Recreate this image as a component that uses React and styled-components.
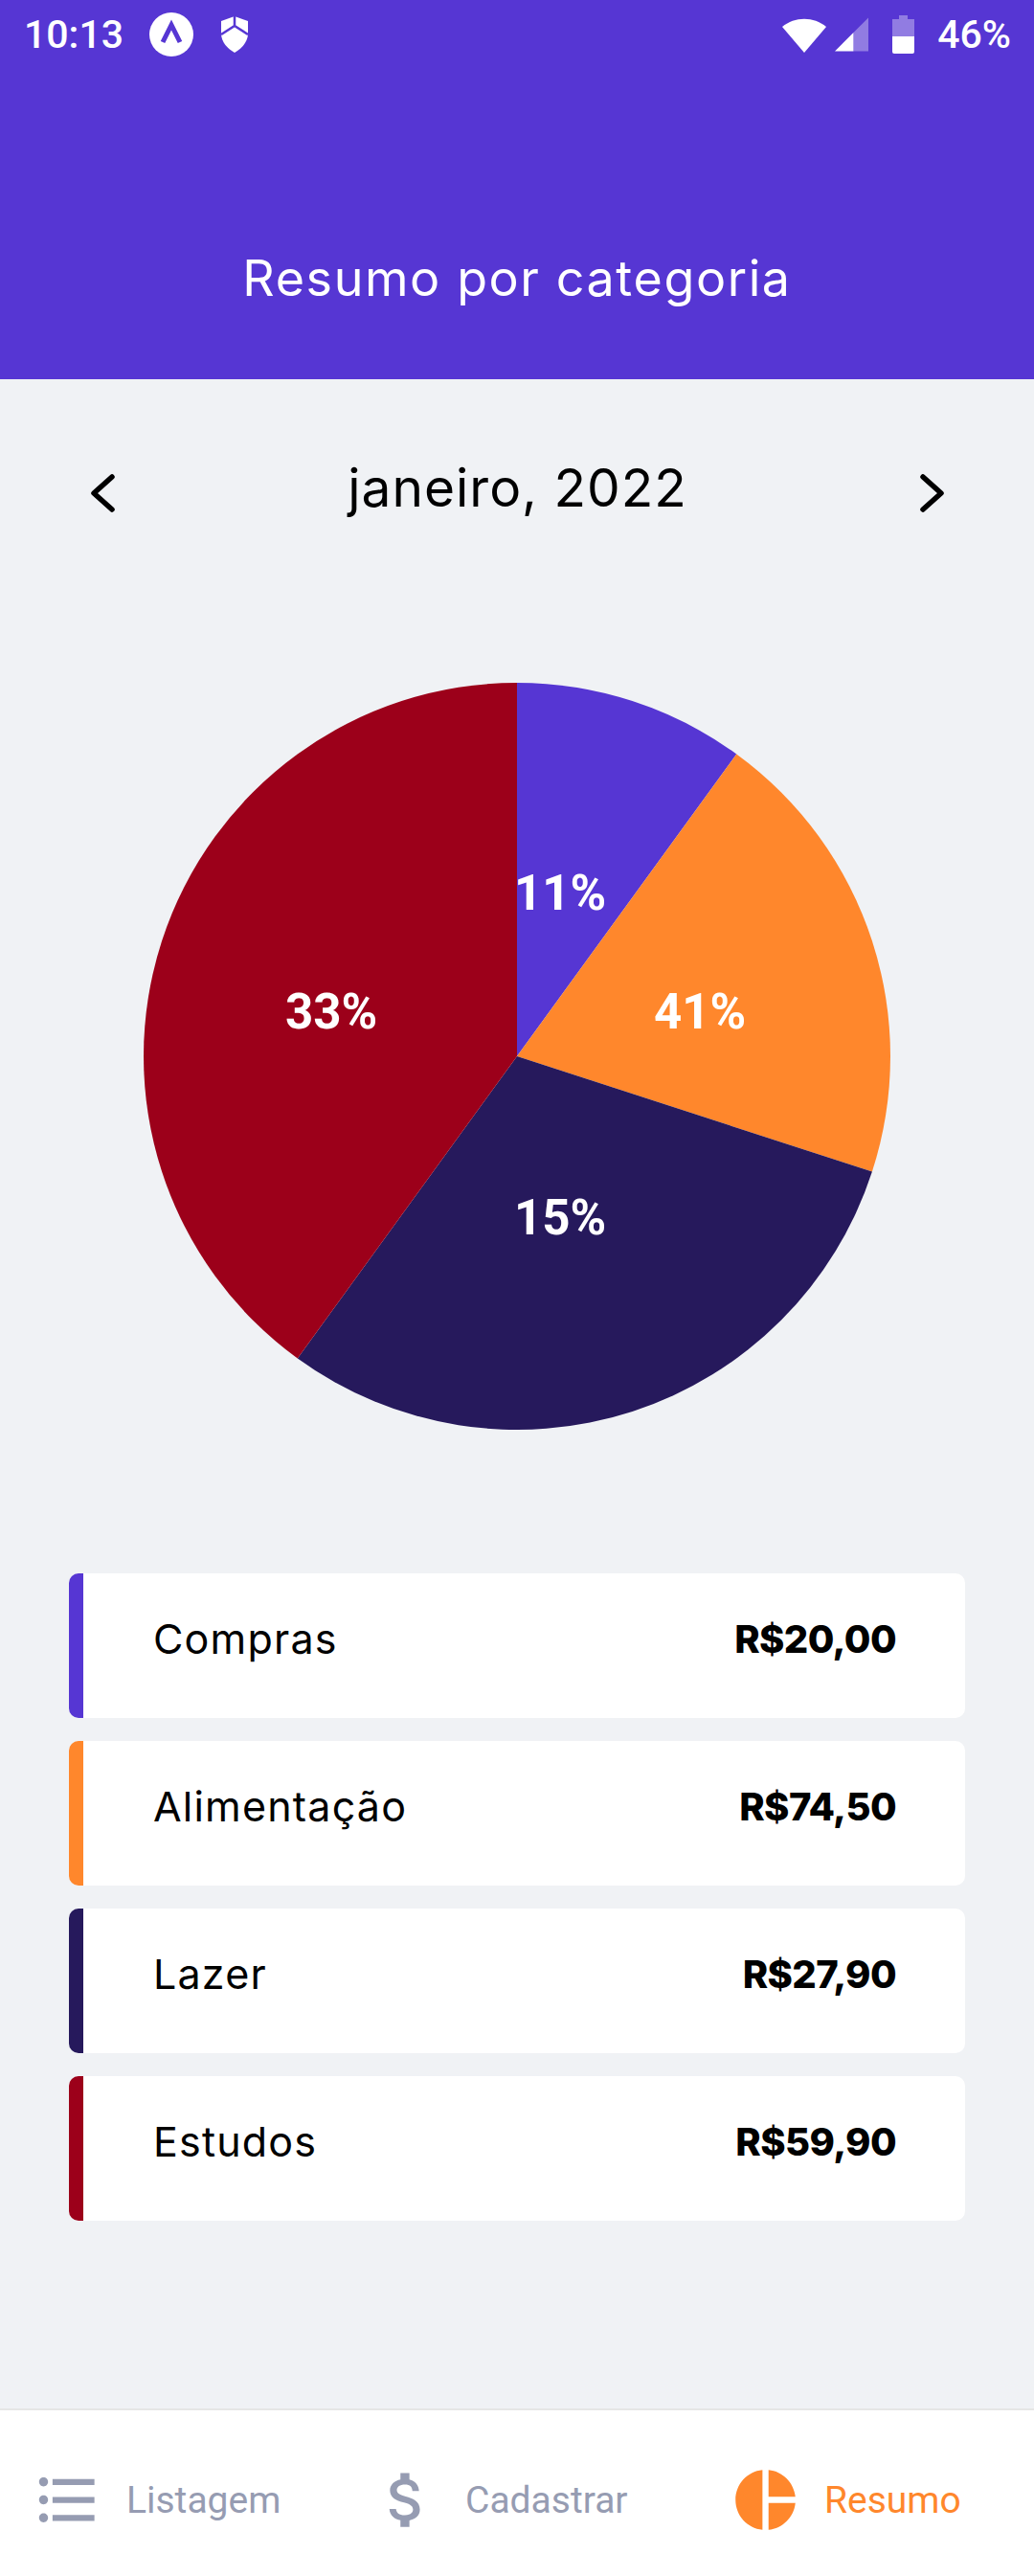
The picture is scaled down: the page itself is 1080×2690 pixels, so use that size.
import React from "react";
import styled, { createGlobalStyle } from "styled-components";

const Global = createGlobalStyle`
  html, body { margin: 0; padding: 0; background: #f0f2f5; }
  * { box-sizing: border-box; }
`;

const Page = styled.div`
  width: 1080px;
  height: 2690px;
  display: flex;
  flex-direction: column;
  background: #f0f2f5;
  overflow: hidden;
`;

const Header = styled.header`
  height: 396px;
  flex: none;
  background: #5636d3;
  color: #fff;
  display: flex;
  flex-direction: column;
`;

const StatusBar = styled.div`
  height: 72px;
  padding: 0 24px 0 25px;
  display: flex;
  align-items: center;
  justify-content: space-between;
  font-family: Roboto, sans-serif;
  font-size: 41px;
  font-weight: 500;
`;

const StatusGroup = styled.div`
  display: flex;
  align-items: center;
`;

const Clock = styled.span`
  margin-right: 27px;
`;

const Battery = styled.span`
  margin-left: 24px;
`;

const Title = styled.h1`
  margin: 0;
  padding-top: 189px;
  text-align: center;
  font-family: Inter, sans-serif;
  font-weight: 400;
  font-size: 52px;
  letter-spacing: 1.6px;
  line-height: 60px;
`;

const Selector = styled.div`
  margin-top: 84px;
  padding: 0 94px 0 95px;
  height: 70px;
  display: flex;
  align-items: center;
  justify-content: space-between;
`;

const Month = styled.span`
  font-family: Inter, sans-serif;
  font-weight: 400;
  font-size: 55px;
  letter-spacing: 1px;
  line-height: 70px;
  color: #000;
  margin-top: -12px;
`;

const ChartBox = styled.div`
  margin-top: 163px;
  display: flex;
  justify-content: center;
`;

const ChartLabel = styled.text`
  font-family: Roboto, sans-serif;
  font-weight: 700;
  font-size: 51px;
  fill: #fff;
  text-anchor: middle;
`;

const List = styled.ul`
  list-style: none;
  margin: 150px 0 0;
  padding: 0 72px;
  display: flex;
  flex-direction: column;
  gap: 24px;
`;

const Card = styled.li`
  height: 151px;
  background: #fff;
  border-left: 15px solid ${(p) => p.$color};
  border-radius: 10px;
  padding: 0 72px 15px 73px;
  display: flex;
  align-items: center;
  justify-content: space-between;
`;

const CardName = styled.span`
  font-family: Inter, sans-serif;
  font-weight: 400;
  font-size: 43px;
  letter-spacing: 1.2px;
  color: #000;
`;

const CardValue = styled.span`
  font-family: Inter, sans-serif;
  font-weight: 800;
  font-size: 40px;
  letter-spacing: -0.6px;
  color: #000;
`;

const TabBar = styled.nav`
  margin-top: auto;
  height: 175px;
  flex: none;
  background: #fff;
  border-top: 2px solid #e6e6e6;
  padding: 14px 0 0 33px;
  display: grid;
  grid-template-columns: 354px 375px 1fr;
  align-items: center;
`;

const Tab = styled.div`
  display: flex;
  align-items: center;
  gap: 24px;
  color: ${(p) => (p.$active ? "#ff872c" : "#969cb2")};
  font-family: Roboto, sans-serif;
  font-size: 39px;
`;

const TabIcon = styled.svg`
  width: 75px;
  height: 75px;
  fill: currentColor;
  flex: none;
`;

const Chevron = styled.svg`
  width: 25px;
  height: 40px;
  fill: none;
  stroke: #000;
  stroke-width: 5.5;
  stroke-linecap: round;
  stroke-linejoin: round;
  flex: none;
`;

const StatusIcon = styled.svg`
  display: block;
  flex: none;
  fill: #fff;
  margin-left: ${(p) => p.$ml || 0}px;
`;

const slices = [
  { color: "#5636d3", from: 0, to: 36 },
  { color: "#ff872c", from: 36, to: 108 },
  { color: "#26195c", from: 108, to: 216 },
  { color: "#9c001a", from: 216, to: 360 },
];
const pt = (deg) => {
  const r = (deg * Math.PI) / 180;
  return `${390 + 390 * Math.sin(r)} ${390 - 390 * Math.cos(r)}`;
};
const labels = [
  { t: "11%", x: 435, y: 237 },
  { t: "41%", x: 581, y: 361 },
  { t: "15%", x: 435, y: 576 },
  { t: "33%", x: 196, y: 361 },
];
const items = [
  { name: "Compras", value: "R$20,00", color: "#5636d3" },
  { name: "Alimentação", value: "R$74,50", color: "#ff872c" },
  { name: "Lazer", value: "R$27,90", color: "#26195c" },
  { name: "Estudos", value: "R$59,90", color: "#9c001a" },
];

export default function App() {
  return (
    <Page>
      <Global />
      <Header>
        <StatusBar>
          <StatusGroup>
            <Clock>10:13</Clock>
            <StatusIcon width="46" height="46" viewBox="0 0 46 46">
              <circle cx="23" cy="23" r="23" />
              <path d="M14 31 L23 13 L32 31" fill="none" stroke="#5636d3" strokeWidth="5" />
            </StatusIcon>
            <StatusIcon width="30" height="38" viewBox="0 0 30 38" $ml={28}>
              <path d="M15 0 L29 5 V18 C29 27 22 34 15 38 C8 34 1 27 1 18 V5 Z" />
              <path d="M1 19 L15 10 L29 19 M15 0 V10" fill="none" stroke="#5636d3" strokeWidth="2.5" />
            </StatusIcon>
          </StatusGroup>
          <StatusGroup>
            <StatusIcon width="46" height="38" viewBox="0 0 46 38">
              <path d="M0 11 C13 0 33 0 46 11 L23 38 Z" />
            </StatusIcon>
            <StatusIcon width="35" height="36" viewBox="0 0 36 36" $ml={9}>
              <path d="M36 0 V36 H20 V16 Z" opacity="0.35" />
              <path d="M0 36 L20 16 V36 Z" />
            </StatusIcon>
            <StatusIcon width="23" height="40" viewBox="0 0 23 40" $ml={25}>
              <path d="M7 0 H16 V4 H23 V22 H0 V4 H7 Z" opacity="0.35" />
              <path d="M0 22 H23 V38 a2 2 0 0 1 -2 2 H2 a2 2 0 0 1 -2 -2 Z" />
            </StatusIcon>
            <Battery>46%</Battery>
          </StatusGroup>
        </StatusBar>
        <Title>Resumo por categoria</Title>
      </Header>

      <Selector>
        <Chevron viewBox="0 0 25 40"><path d="M22 3 L3 20 L22 37" /></Chevron>
        <Month>janeiro, 2022</Month>
        <Chevron viewBox="0 0 25 40"><path d="M3 3 L22 20 L3 37" /></Chevron>
      </Selector>

      <ChartBox>
        <svg width="780" height="780" viewBox="0 0 780 780">
          {slices.map((s) => (
            <path
              key={s.color}
              fill={s.color}
              d={`M390 390 L${pt(s.from)} A390 390 0 ${s.to - s.from > 180 ? 1 : 0} 1 ${pt(s.to % 360 === 0 ? 359.999 : s.to)} Z`}
            />
          ))}
          {labels.map((l) => (
            <ChartLabel key={l.t} x={l.x} y={l.y}>{l.t}</ChartLabel>
          ))}
        </svg>
      </ChartBox>

      <List>
        {items.map((i) => (
          <Card key={i.name} $color={i.color}>
            <CardName>{i.name}</CardName>
            <CardValue>{i.value}</CardValue>
          </Card>
        ))}
      </List>

      <TabBar>
        <Tab>
          <TabIcon viewBox="0 0 24 24">
            <path d="M4 10.5c-.83 0-1.5.67-1.5 1.5s.67 1.5 1.5 1.5 1.5-.67 1.5-1.5-.67-1.5-1.5-1.5zm0-6c-.83 0-1.5.67-1.5 1.5S3.17 7.5 4 7.5 5.5 6.83 5.5 6 4.83 4.5 4 4.5zm0 12c-.83 0-1.5.68-1.5 1.5s.68 1.5 1.5 1.5 1.5-.68 1.5-1.5-.67-1.5-1.5-1.5zM7 19h14v-2H7v2zm0-6h14v-2H7v2zm0-8v2h14V5H7z" />
          </TabIcon>
          Listagem
        </Tab>
        <Tab>
          <TabIcon viewBox="0 0 24 24">
            <path d="M11.8 10.9c-2.27-.59-3-1.2-3-2.15 0-1.09 1.01-1.85 2.7-1.85 1.78 0 2.44.85 2.5 2.1h2.21c-.07-1.72-1.12-3.3-3.21-3.81V3h-3v2.16c-1.94.42-3.5 1.68-3.5 3.61 0 2.31 1.91 3.46 4.7 4.13 2.5.6 3 1.48 3 2.41 0 .69-.49 1.79-2.7 1.79-2.06 0-2.87-.92-2.98-2.1h-2.2c.12 2.19 1.76 3.42 3.68 3.83V21h3v-2.15c1.95-.37 3.5-1.5 3.5-3.55 0-2.84-2.43-3.81-4.7-4.4z" />
          </TabIcon>
          Cadastrar
        </Tab>
        <Tab $active>
          <TabIcon viewBox="0 0 24 24">
            <path d="M11 2v20c-5.07-.5-9-4.79-9-10s3.93-9.5 9-10zm2.03 0v8.99H22c-.47-4.74-4.24-8.52-8.97-8.99zm0 11.01V22c4.74-.47 8.5-4.25 8.97-8.99h-8.97z" />
          </TabIcon>
          Resumo
        </Tab>
      </TabBar>
    </Page>
  );
}
